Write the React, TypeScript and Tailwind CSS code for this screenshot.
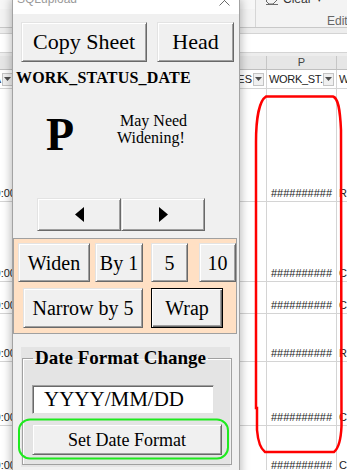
import type { ReactNode } from 'react';
import clsx from 'clsx';

const serif = "font-['Liberation_Serif','Times_New_Roman',serif]";

// classic VBA command button, raised 3D edges
function Btn({ className, children, isDefault }: { className?: string; children?: ReactNode; isDefault?: boolean }) {
  return (
    <button
      type="button"
      className={clsx(
        'flex shrink-0 items-center justify-center bg-[#f0f0f0] leading-none text-black',
        isDefault
          ? 'border border-black shadow-[inset_1px_1px_0_#ffffff,inset_-1px_-1px_0_#696969,inset_-2px_-2px_0_#a0a0a0]'
          : 'border border-t-[#e3e3e3] border-l-[#e3e3e3] border-r-[#696969] border-b-[#696969] shadow-[inset_1px_1px_0_#ffffff,inset_-1px_-1px_0_#a0a0a0]',
        className
      )}
    >
      {children}
    </button>
  );
}

function Dropdown() {
  return (
    <div className="flex h-[13px] w-[11px] shrink-0 items-center justify-center border border-[#c4c4c4] bg-[#f0f0f0]">
      <svg width="7" height="4" viewBox="0 0 7 4">
        <polygon points="0,0 7,0 3.5,4" fill="#505050" />
      </svg>
    </div>
  );
}

const rows = [
  { h: 'h-[113px]', q: 'R-' },
  { h: 'h-[80px]', q: 'C-' },
  { h: 'h-[32px]', q: 'C-' },
  { h: 'h-[48px]', q: 'R-' },
  { h: 'h-[64px]', q: 'C-' },
  { h: 'h-[48px]', q: 'C-' },
];

export default function App() {
  return (
    <div className="relative h-[470px] w-[347px] overflow-hidden bg-white font-['Liberation_Sans',Arial,sans-serif]">
      {/* --- Excel behind the form --- */}
      <div className="flex flex-col">
        {/* ribbon */}
        <div className="flex h-[28px] border-b border-[#c8c8c8] bg-[#f3f3f3]">
          <div className="w-[255px] shrink-0 border-t-[9px] border-[#f7f7f7]" />
          <div className="flex flex-1 flex-col border-l border-[#d6d6d6] pl-[9px]">
            <div className="-mt-[8px] flex items-center text-[12px] leading-[14px] text-[#333]">
              <svg width="14" height="12" viewBox="0 0 14 12" className="mr-[4px]">
                <path d="M1 8 L7 2 L12 7 L8 11 L4 11 Z" fill="none" stroke="#6a6a6a" strokeWidth="1" />
                <path d="M1 11.5 H13" stroke="#6a6a6a" strokeWidth="1" />
              </svg>
              <span>Clear</span>
              <span className="ml-[5px] text-[9px]">▾</span>
            </div>
            <div className="ml-[62px] mt-[9px] whitespace-nowrap text-[12px] leading-[12px] text-[#666]">Editing</div>
          </div>
        </div>
        {/* formula bar */}
        <div className="h-[5px] bg-[#ededed]" />
        <div className="h-[20px] border-y border-[#d4d4d4] bg-white" />
        <div className="h-[3px] bg-[#ededed]" />
        {/* column headers */}
        <div className="grid h-[14px] grid-cols-[16px_250px_70px_1fr] border-b border-[#bfbfbf] bg-[#e6e6e6] text-[11px] leading-[13px] text-[#444]">
          <div />
          <div />
          <div className="border-l border-[#c6c6c6] text-center">P</div>
          <div className="border-l border-[#c6c6c6]" />
        </div>
        {/* filter row */}
        <div className="grid h-[19px] grid-cols-[16px_250px_70px_1fr] items-center border-b border-[#d4d4d4] text-[11px] leading-[13px] text-[#222]">
          <div className="flex items-center justify-end overflow-hidden pr-[3px]">
            <span className="mr-[1px]">A</span>
            <Dropdown />
          </div>
          <div className="flex items-center justify-end overflow-hidden pr-[2px]">
            <span className="mr-[1px] whitespace-nowrap">DATES</span>
            <Dropdown />
          </div>
          <div className="flex h-full items-center border-l border-[#d4d4d4] pl-[2px]">
            <span className="whitespace-nowrap tracking-[-0.3px]">WORK_ST.</span>
            <div className="ml-auto mr-[2px]">
              <Dropdown />
            </div>
          </div>
          <div className="flex h-full items-center overflow-hidden border-l border-[#d4d4d4] pl-[2px]">W</div>
        </div>
        {/* data rows */}
        {rows.map((r, i) => (
          <div
            key={i}
            className={clsx(
              'grid grid-cols-[16px_250px_70px_1fr] border-b border-[#d4d4d4] text-[11px] leading-[13px] text-[#222]',
              r.h
            )}
          >
            <div className="flex items-end justify-end overflow-hidden pb-[1px]">
              <span className="whitespace-nowrap">0:00</span>
            </div>
            <div />
            <div className="flex items-end justify-center border-l border-[#d4d4d4] pb-[1px]">##########</div>
            <div className="flex items-end overflow-hidden border-l border-[#d4d4d4] pb-[1px] pl-[2px]">{r.q}</div>
          </div>
        ))}
      </div>

      {/* --- SQLupload userform (window over the sheet) --- */}
      <div
        className={clsx(
          'absolute left-[12px] top-0 h-[490px] w-[228px] border-x border-[#a3a3a3] bg-[#f0f0f0] shadow-[0_0_9px_1px_rgba(0,0,0,0.28)]',
          serif
        )}
      >
        {/* title bar */}
        <div className="flex h-[14px] items-start justify-between overflow-hidden bg-white pl-[4px] pr-[9px]">
          <span className="-mt-[7px] font-['Liberation_Sans',Arial,sans-serif] text-[12px] leading-[12px] text-[#9a9a9a]">
            SQLupload
          </span>
          <svg width="11" height="11" viewBox="0 0 11 11" className="-mt-[5px]">
            <path d="M0.5 0.5 L10.5 10.5 M10.5 0.5 L0.5 10.5" stroke="#6b6b6b" strokeWidth="1" />
          </svg>
        </div>

        <div className="flex flex-col">
          <div className="mt-[8px] flex">
            <Btn className="ml-[8px] h-[40px] w-[126px] text-[22px]">Copy Sheet</Btn>
            <Btn className="ml-[10px] h-[40px] w-[77px] text-[22px]">Head</Btn>
          </div>

          <div className="ml-[3px] mt-[8px] text-[16px] font-bold leading-[16px] tracking-[0.2px] text-black">
            WORK_STATUS_DATE
          </div>

          <div className="mt-[26px] flex items-start">
            <span className="ml-[33px] w-[71px] text-[46px] font-bold leading-[46px]">P</span>
            <div className="indent-[3px] text-[16px] leading-[17px]">
              May Need
              <br />
              Widening!
            </div>
          </div>

          <div className="ml-[24px] mt-[40px] flex">
            <Btn className="h-[33px] w-[84px]">
              <svg width="9" height="15" viewBox="0 0 9 15">
                <polygon points="9,0 9,15 0,7.5" fill="#000" />
              </svg>
            </Btn>
            <Btn className="h-[33px] w-[84px]">
              <svg width="9" height="15" viewBox="0 0 9 15">
                <polygon points="0,0 0,15 9,7.5" fill="#000" />
              </svg>
            </Btn>
          </div>

          {/* peach frame with width buttons */}
          <div className="mt-[7px] flex h-[96px] w-[224px] flex-col overflow-hidden border border-[#a0a0a0] bg-[#ffe0c4] pt-[4px]">
            <div className="flex text-[20px]">
              <Btn className="ml-[4px] h-[39px] w-[72px]">Widen</Btn>
              <Btn className="ml-[5px] h-[39px] w-[48px]">By 1</Btn>
              <Btn className="ml-[8px] h-[39px] w-[37px]">5</Btn>
              <Btn className="ml-[11px] h-[39px] w-[37px]">10</Btn>
            </div>
            <div className="mt-[6px] flex text-[20px]">
              <Btn className="ml-[9px] h-[40px] w-[120px]">Narrow by 5</Btn>
              <Btn isDefault className="ml-[8px] h-[40px] w-[72px]">Wrap</Btn>
            </div>
          </div>

          {/* Date Format Change group */}
          <div className="ml-[8px] mt-[13px] w-[209px] bg-[#e4e4e4] px-[1px] pb-[2px] pt-[1px]">
            <fieldset className="border border-[#a0a0a0] px-[9px] pb-[9px] shadow-[inset_1px_1px_0_#ffffff]">
              <legend className="ml-[1px] px-[2px] text-[19px] font-bold leading-[20px]">Date Format Change</legend>
              <div className="mt-[17px] flex h-[29px] w-[182px] items-center border border-t-[#a0a0a0] border-l-[#a0a0a0] border-r-[#e3e3e3] border-b-[#e3e3e3] bg-white pl-[11px] text-[21px] leading-none shadow-[inset_1px_1px_0_#696969]">
                YYYY/MM/DD
              </div>
              <Btn className="mt-[10px] h-[31px] w-[190px] text-[18px]">Set Date Format</Btn>
            </fieldset>
          </div>
        </div>
      </div>

      {/* --- hand-drawn annotations --- */}
      <svg className="pointer-events-none absolute left-0 top-0" width="347" height="470" viewBox="0 0 347 470">
        <path
          d="M266 96.5 L333 96.5 C338 98 340 108 341 130 L341.5 426 C341 438 339 448 334 452 L265 452 C261 449 258 442 257 430 L257 408 L256 408 L256 142 C256 120 259 101 266 96.5 Z"
          fill="none"
          stroke="#ff0000"
          strokeWidth="2.5"
        />
        <rect x="19" y="419.5" width="209" height="39" rx="11" fill="none" stroke="#1eea1e" strokeWidth="2" />
      </svg>
    </div>
  );
}
